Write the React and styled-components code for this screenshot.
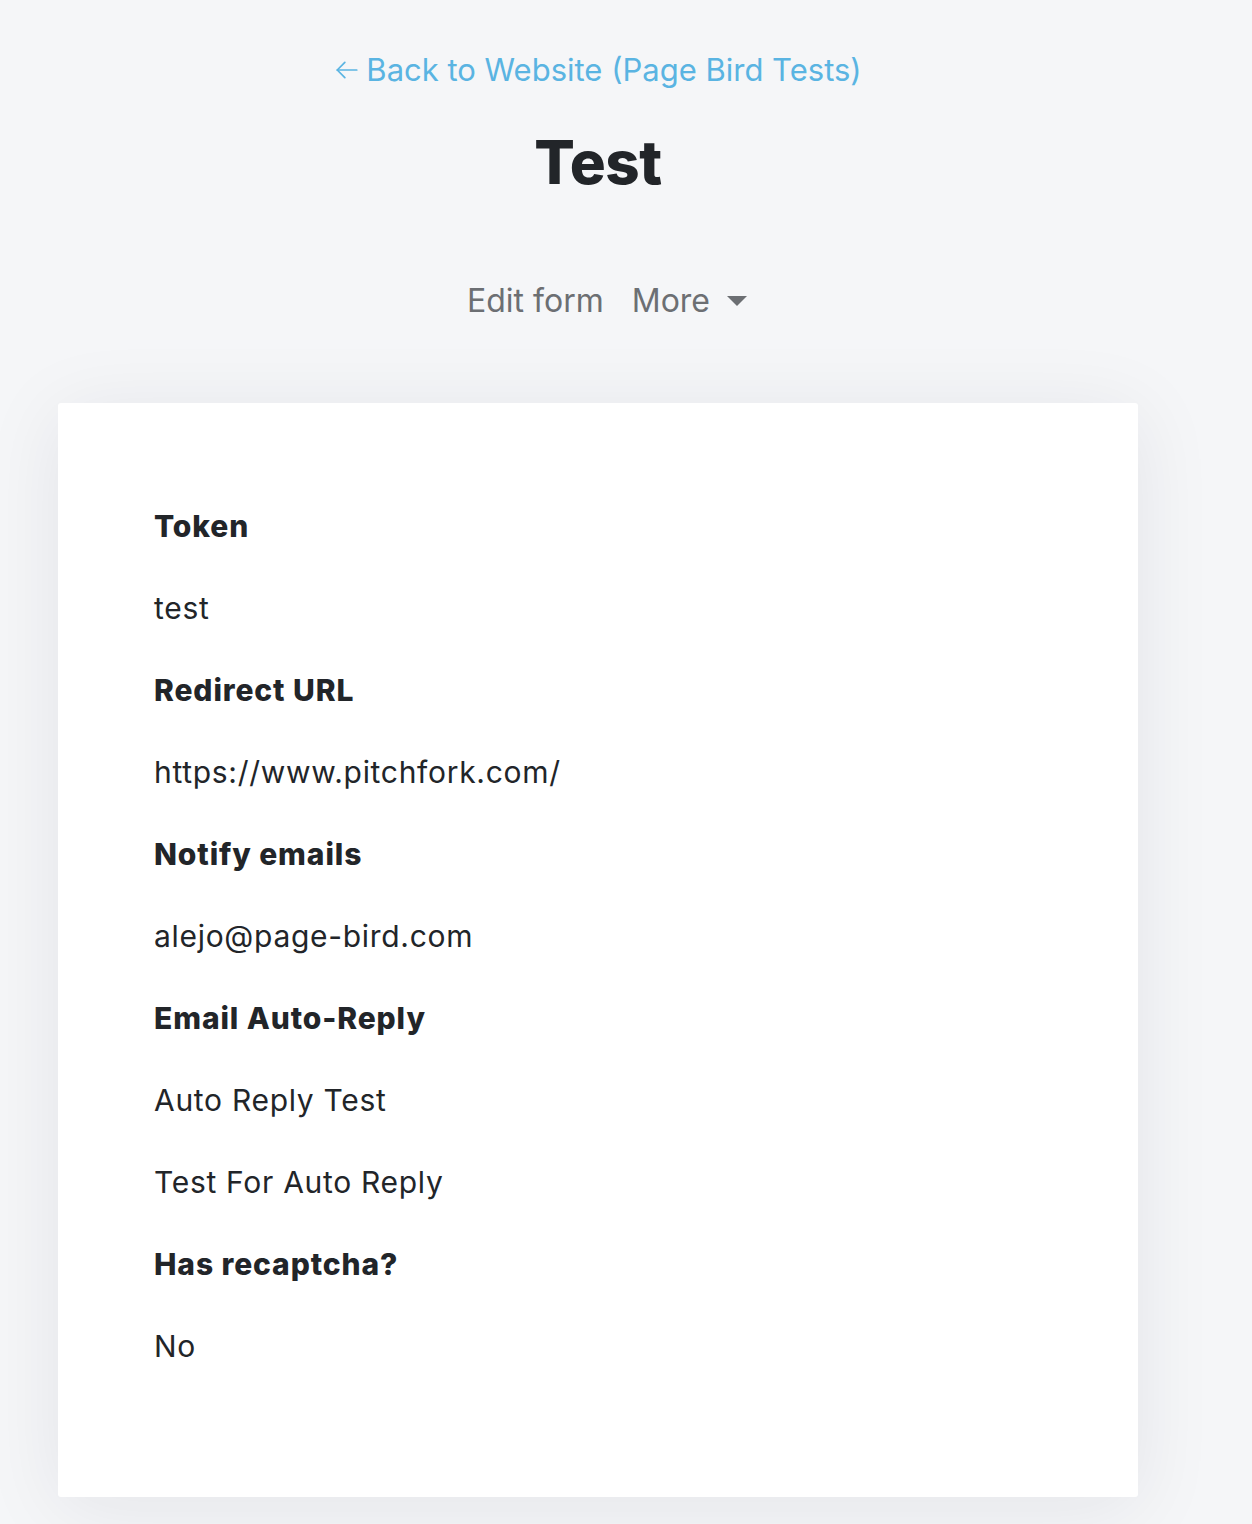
import React from "react";
import styled, { createGlobalStyle } from "styled-components";

const Global = createGlobalStyle`
  html, body { margin: 0; padding: 0; background: #f5f6f8; }
  body { font-family: Inter, "Noto Sans", sans-serif; color: #222529; }
  * { box-sizing: border-box; }
`;

const Page = styled.div`
  width: 1252px;
  min-height: 1524px;
  padding: 0 114px 0 58px;
`;

const Header = styled.header`
  display: flex;
  flex-direction: column;
  align-items: center;
  padding-top: 50px;
`;

const BackLink = styled.a`
  font-size: 31px;
  line-height: 40px;
  color: #5ab4e2;
  text-decoration: none;
  display: flex;
  align-items: center;
  gap: 6px;
`;

const Title = styled.h1`
  margin: 36px 0 0;
  font-size: 60px;
  line-height: 72px;
  font-weight: 800;
  letter-spacing: -0.5px;
  color: #222529;
`;

const Nav = styled.nav`
  display: flex;
  gap: 28px;
  margin-top: 83px;
  padding-left: 18px;
  align-items: center;
`;

const NavItem = styled.span`
  font-size: 32px;
  line-height: 40px;
  color: #6c6f73;
  display: flex;
  align-items: center;
  gap: 17px;
`;

const Caret = styled.span`
  width: 0;
  height: 0;
  border-left: 10px solid transparent;
  border-right: 10px solid transparent;
  border-top: 10px solid #6c6f73;
`;

const Card = styled.section`
  margin-top: 82px;
  width: 1080px;
  height: 1094px;
  background: #fff;
  border-radius: 3px;
  box-shadow: 0 10px 80px rgba(20, 30, 50, 0.08);
  padding: 102px 96px 90px;
`;

const Label = styled.div`
  font-size: 30px;
  line-height: 42px;
  font-weight: 800;
  letter-spacing: 0.9px;
  color: #222529;
  margin-bottom: 40px;
`;

const Value = styled.div`
  font-size: 30px;
  line-height: 42px;
  letter-spacing: 0.7px;
  color: #222529;
  margin-bottom: 40px;
`;

const ArrowIcon = () => (
  <svg width="26" height="26" viewBox="0 0 24 24" fill="none" stroke="#5ab4e2" strokeWidth="1.6" strokeLinecap="round" strokeLinejoin="round">
    <path d="M21 12H3" />
    <path d="M10 5l-7 7 7 7" />
  </svg>
);

const rows = [
  ["label", "Token"],
  ["value", "test"],
  ["label", "Redirect URL"],
  ["value", "https://www.pitchfork.com/"],
  ["label", "Notify emails"],
  ["value", "alejo@page-bird.com"],
  ["label", "Email Auto-Reply"],
  ["value", "Auto Reply Test"],
  ["value", "Test For Auto Reply"],
  ["label", "Has recaptcha?"],
  ["value", "No"],
];

export default function App() {
  return (
    <>
      <Global />
      <Page>
        <Header>
          <BackLink href="#">
            <ArrowIcon />
            Back to Website (Page Bird Tests)
          </BackLink>
          <Title>Test</Title>
          <Nav>
            <NavItem>Edit form</NavItem>
            <NavItem>
              More <Caret />
            </NavItem>
          </Nav>
        </Header>
        <Card>
          {rows.map(([kind, text], i) =>
            kind === "label" ? <Label key={i}>{text}</Label> : <Value key={i}>{text}</Value>
          )}
        </Card>
      </Page>
    </>
  );
}
